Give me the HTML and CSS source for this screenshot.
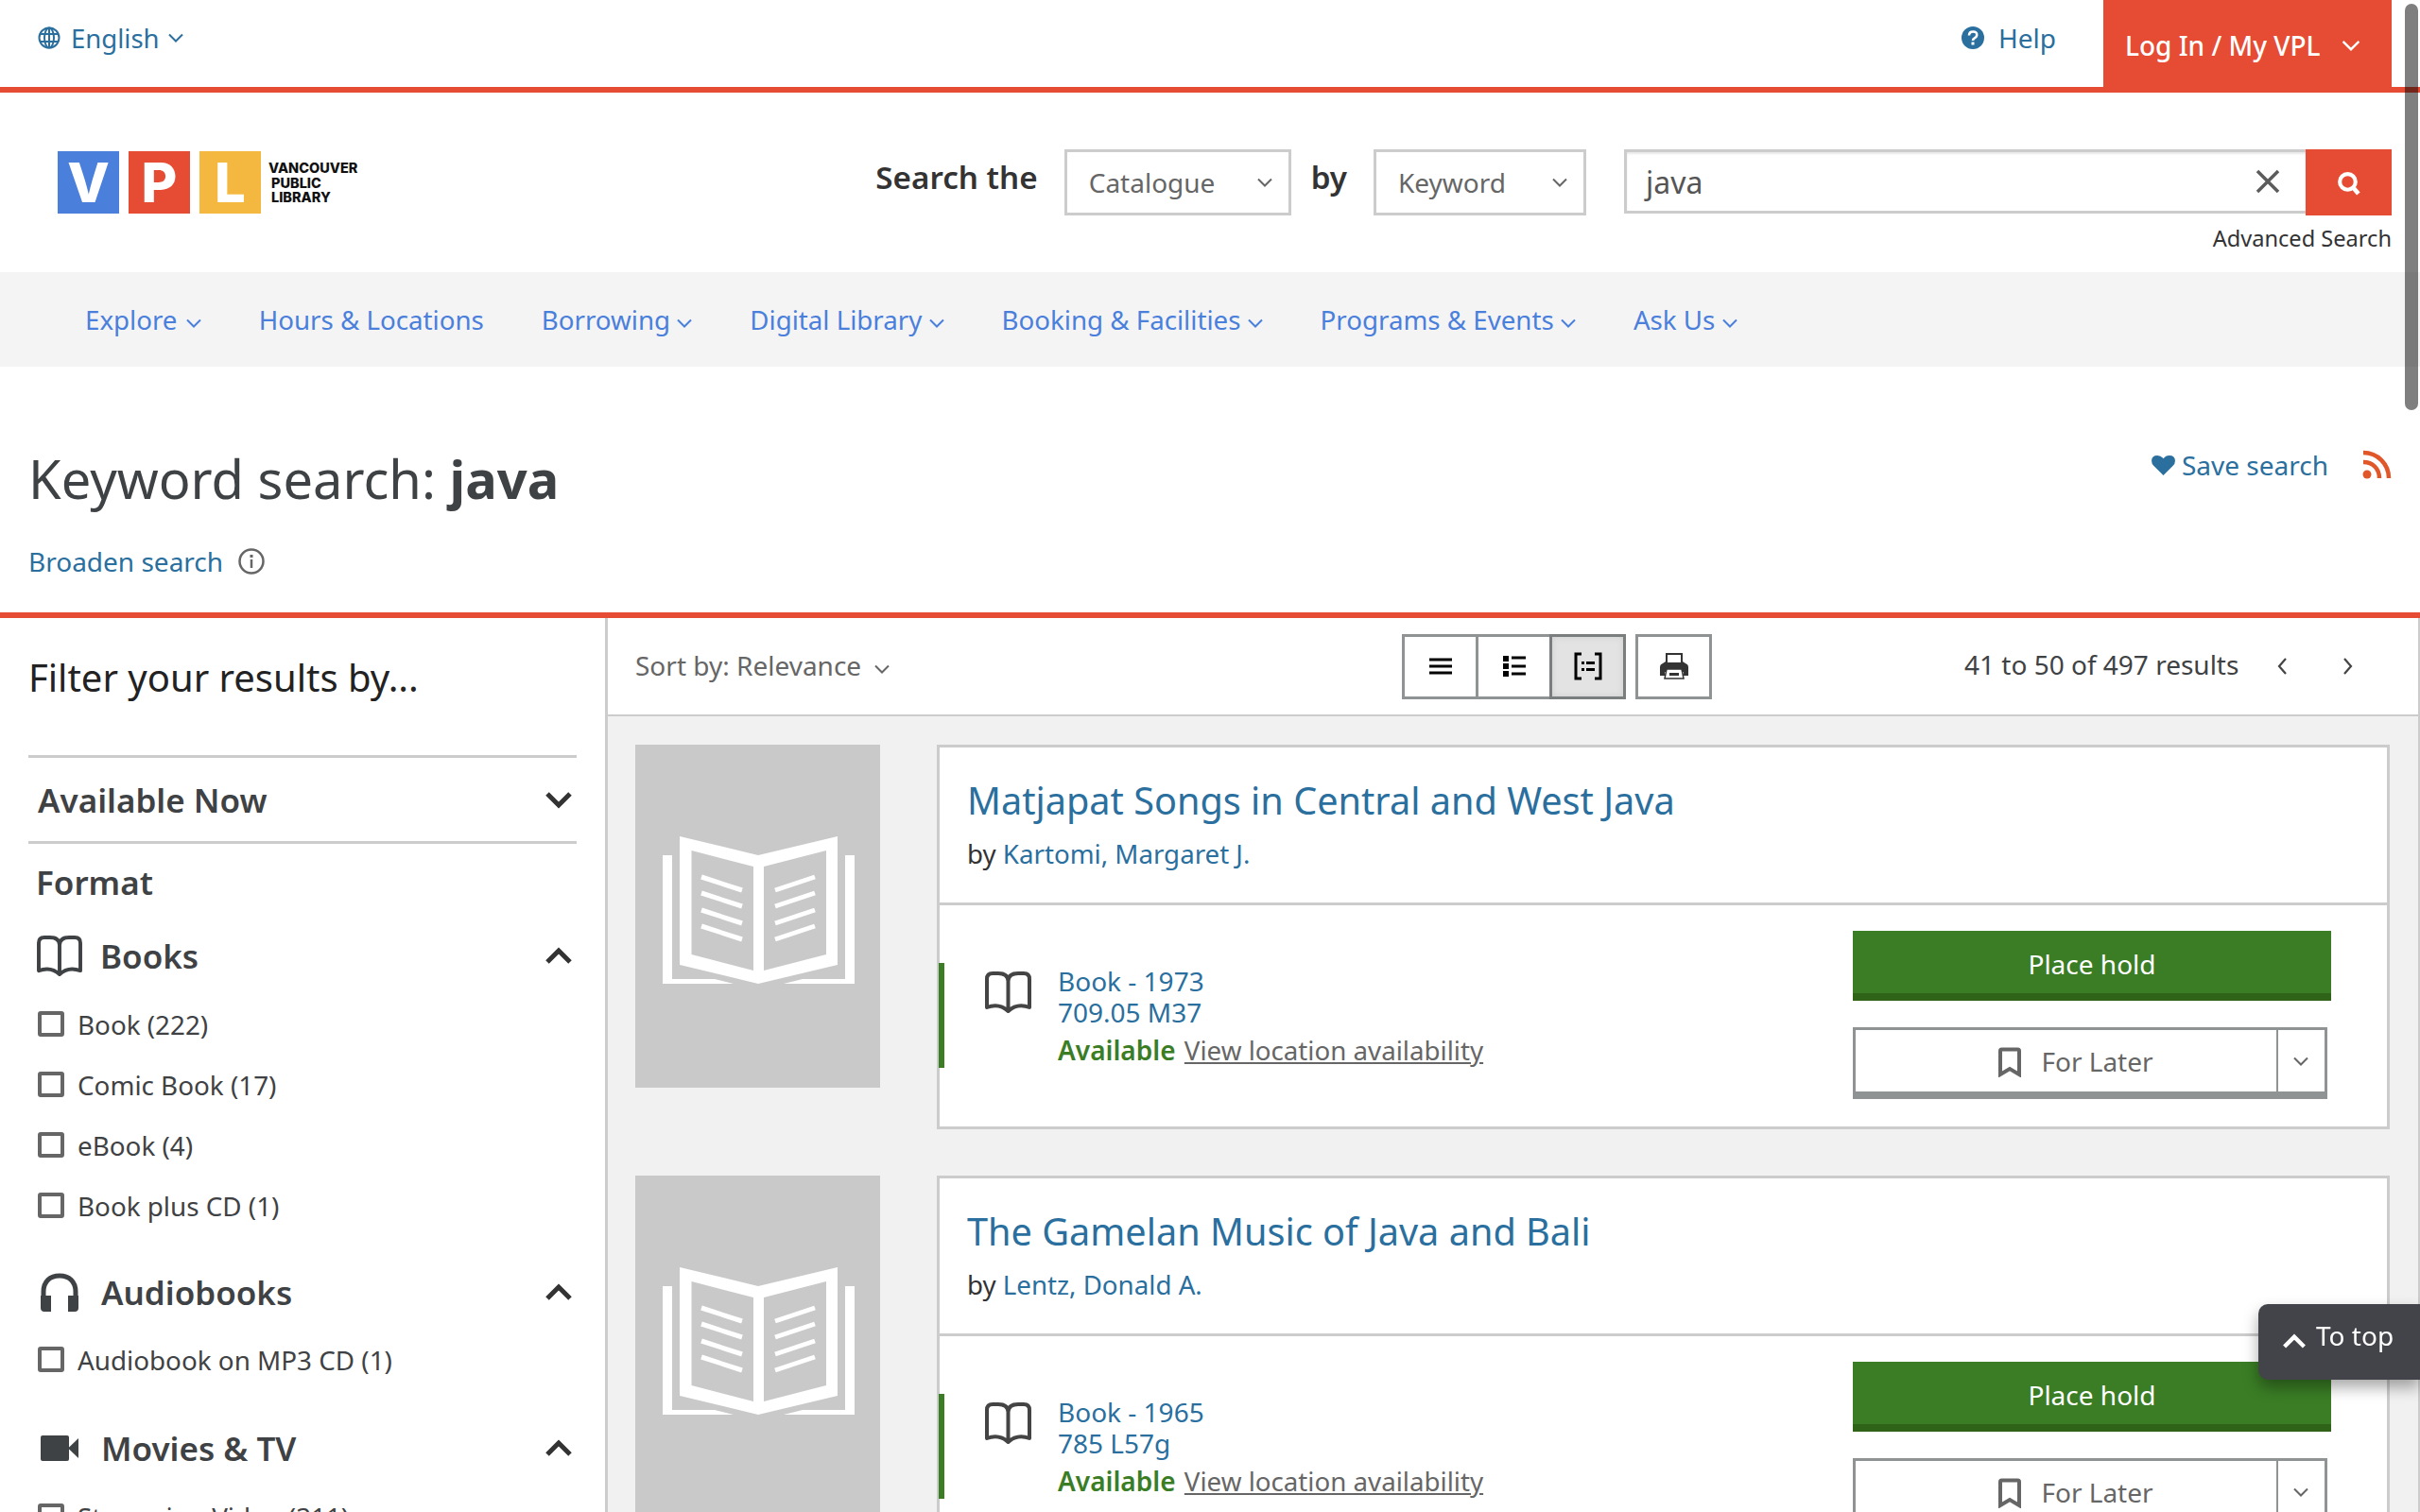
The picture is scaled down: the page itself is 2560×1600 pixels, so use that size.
FILE: index.html
```html
<!DOCTYPE html>
<html lang="en">
<head>
    <meta charset="UTF-8">
    <meta name="viewport" content="width=device-width, initial-scale=1.0">
    <title>Keyword search: java</title>
    <link rel="stylesheet" href="styles.css">
</head>
<body>
    <svg class="sprites">
        <defs>
            <symbol id="chev" viewBox="0 0 16 10">
                <path d="M1 1.500l7 7 7-7" fill="none" stroke="currentColor" stroke-width="2"></path>
            </symbol>
            <symbol id="chev-big" viewBox="0 0 30 20">
                <path d="M3 4l12 12 12-12" fill="none" stroke="currentColor" stroke-width="5"></path>
            </symbol>
            <symbol id="chev-up" viewBox="0 0 30 20">
                <path d="M3 17L15 5l12 12" fill="none" stroke="currentColor" stroke-width="5"></path>
            </symbol>
            <symbol id="book" viewBox="0 0 51 46">
                <path d="M3 39V9q0-6 6-6h6q10 0 10.500 8 .5-8 10.500-8h6q6 0 6 6v30q-13-5-22.500 4Q16 34 3 39zM25.500 11v31" fill="none" stroke="currentColor" stroke-width="4" stroke-linejoin="round"></path>
            </symbol>
            <symbol id="bookmark" viewBox="0 0 26 32">
                <path d="M3 29V4q0-1.500 1.500-1.500h17Q23 2.500 23 4v25l-10-6z" fill="none" stroke="currentColor" stroke-width="4"></path>
            </symbol>
            <symbol id="cover" viewBox="0 0 203 156">
                <path fill="#fff" fill-rule="evenodd" d="M18 0l83 20 84-20v136l-84 20-83-20zM30.500 15v110l65.500 17V32zM173 15l-66 17v110l66-17z"></path>
                <path fill="#fff" d="M0 20h10v131h45l20 5H0zM203 20h-10v131h-45l-20 5h75z"></path>
                <path stroke="#fff" stroke-width="5" d="M41 43l43 14M41 60l43 14M41 78l43 14M41 95l43 14M161 43l-42 14M161 60l-42 14M161 78l-42 14M161 95l-42 14"></path>
            </symbol>
        </defs>
    </svg>

    <div class="topbar">
        <a class="lang">
            <svg class="globe" viewBox="0 0 24 24"><g fill="none" stroke="currentColor" stroke-width="2"><circle cx="12" cy="12" r="10.500"></circle><ellipse cx="12" cy="12" rx="5" ry="10.500"></ellipse><path d="M2 8h20M2 16h20M12 1v22"></path></g></svg>
            English <svg class="chev"><use href="#chev"></use></svg>
        </a>
        <a class="help">
            <svg class="help-icon" viewBox="0 0 24 24"><circle cx="12" cy="12" r="12" fill="currentColor"></circle><path d="M8 9.500q0-4 4.200-4t4 3.500q0 2-2.500 3.300-1.700.9-1.700 2.700" fill="none" stroke="#fff" stroke-width="2.600"></path><rect x="10.500" y="16.500" width="3" height="3" fill="#fff"></rect></svg>
            Help
        </a>
        <a class="login">Log In / My VPL <svg class="chev"><use href="#chev"></use></svg></a>
    </div>

    <header class="masthead">
        <div class="logo">
            <span class="sq sq-v">V</span><span class="sq sq-p">P</span><span class="sq sq-l">L</span>
            <span class="logo-name">VANCOUVER<span>PUBLIC</span><span>LIBRARY</span></span>
        </div>
        <div class="search">
            <div class="search-row">
                <span class="search-label">Search the</span>
                <div class="select select-cat">Catalogue <svg class="chev"><use href="#chev"></use></svg></div>
                <span class="search-label by">by</span>
                <div class="select select-key">Keyword <svg class="chev"><use href="#chev"></use></svg></div>
                <div class="query">
                    <span>java</span>
                    <svg class="clear" viewBox="0 0 26 26"><path d="M2 2l22 22M24 2L2 24" stroke="currentColor" stroke-width="3.500"></path></svg>
                </div>
                <div class="go">
                    <svg viewBox="0 0 26 26" class="go-icon"><circle cx="12" cy="12" r="8" fill="none" stroke="#fff" stroke-width="4"></circle><path d="M17 17l6 7" stroke="#fff" stroke-width="4.500"></path></svg>
                </div>
            </div>
            <a class="advanced">Advanced Search</a>
        </div>
    </header>

    <nav class="mainnav">
        <a>Explore <svg class="chev"><use href="#chev"></use></svg></a>
        <a>Hours &amp; Locations</a>
        <a>Borrowing <svg class="chev"><use href="#chev"></use></svg></a>
        <a>Digital Library <svg class="chev"><use href="#chev"></use></svg></a>
        <a>Booking &amp; Facilities <svg class="chev"><use href="#chev"></use></svg></a>
        <a>Programs &amp; Events <svg class="chev"><use href="#chev"></use></svg></a>
        <a>Ask Us <svg class="chev"><use href="#chev"></use></svg></a>
    </nav>

    <section class="heading">
        <div>
            <h1>Keyword search: <b>java</b></h1>
            <a class="broaden">Broaden search
                <svg class="info" viewBox="0 0 30 30"><circle cx="15" cy="15" r="12.500" fill="none" stroke="currentColor" stroke-width="2.500"></circle><path d="M15 13v9" stroke="currentColor" stroke-width="2.500"></path><rect x="13.500" y="8" width="3" height="3" fill="currentColor"></rect></svg>
            </a>
        </div>
        <div class="heading-tools">
            <a class="save">
                <svg class="heart" viewBox="0 0 26 24"><path d="M13 23L2.500 12.500Q0 10 0 7 0 1 6.500 1 10.500 1 13 4.500 15.500 1 19.500 1 26 1 26 7q0 3-2.500 5.500z" fill="currentColor"></path></svg>
                Save search
            </a>
            <svg class="rss" viewBox="0 0 32 32"><g fill="none" stroke="currentColor" stroke-width="4.500"><path d="M2 3c15 0 27 12 27 27"></path><path d="M2 13c10 0 17 7 17 17"></path></g><circle cx="6" cy="26" r="4.500" fill="currentColor"></circle></svg>
        </div>
    </section>

    <div class="layout">
        <aside class="filters">
            <h2>Filter your results by...</h2>
            <div class="avail-now">Available Now <svg class="chev-big"><use href="#chev-big"></use></svg></div>
            <div class="format-label">Format</div>

            <div class="group group-books">
                <svg class="group-icon book-icon"><use href="#book"></use></svg>
                <span>Books</span>
                <svg class="chev-big"><use href="#chev-up"></use></svg>
            </div>
            <label class="check"><i></i>Book (222)</label>
            <label class="check"><i></i>Comic Book (17)</label>
            <label class="check"><i></i>eBook (4)</label>
            <label class="check"><i></i>Book plus CD (1)</label>

            <div class="group group-audio">
                <svg class="group-icon" viewBox="0 0 40 41"><path d="M3 26V20C3 9 10 3 20 3s17 6 17 17v6" fill="none" stroke="currentColor" stroke-width="5"></path><path d="M0 24h11v17H4q-4 0-4-4zM40 24H29v17h7q4 0 4-4z" fill="currentColor"></path></svg>
                <span>Audiobooks</span>
                <svg class="chev-big"><use href="#chev-up"></use></svg>
            </div>
            <label class="check"><i></i>Audiobook on MP3 CD (1)</label>

            <div class="group group-movies">
                <svg class="group-icon video-icon" viewBox="0 0 40 27"><rect width="30" height="27" rx="2" fill="currentColor"></rect><path d="M29 13.500L40 3v21z" fill="currentColor"></path></svg>
                <span>Movies &amp; TV</span>
                <svg class="chev-big"><use href="#chev-up"></use></svg>
            </div>
            <label class="check"><i></i>Streaming Video (311)</label>
        </aside>

        <main class="results">
            <div class="toolbar">
                <div class="sort">Sort by: Relevance <svg class="chev"><use href="#chev"></use></svg></div>
                <div class="views">
                    <div class="view-group">
                        <button class="view-btn"><svg viewBox="0 0 26 22"><path d="M1 4h24M1 11h24M1 18h24" stroke="#000" stroke-width="3"></path></svg></button>
                        <button class="view-btn"><svg viewBox="0 0 26 26"><path d="M1 2h6v6H1zM1 10h6v6H1zM1 18h6v6H1z"></path><path d="M10 4h15M10 13h15M10 21h15" stroke="#000" stroke-width="3"></path></svg></button>
                        <button class="view-btn active"><svg viewBox="0 0 30 30"><path d="M8 2H2v26h6M22 2h6v26h-6" fill="none" stroke="#000" stroke-width="3"></path><path d="M8 10h3v3H8zM8 17h3v3H8z"></path><path d="M13 11.500h9M13 18.500h9" stroke="#000" stroke-width="3"></path></svg></button>
                    </div>
                    <button class="view-btn print"><svg viewBox="0 0 30 30"><path d="M0 25V16q0-3 3-4l3-2V1h18v9l3 2q3 1 3 4v9h-5v-4H5v4z" fill="#333"></path><path d="M8 3h14v8H8z" fill="#fff"></path><path d="M7 18h16l2 10H5z" fill="#fff" stroke="#333" stroke-width="1.500"></path><path d="M10 22h10v3H10z" fill="#333"></path></svg></button>
                </div>
                <div class="paging">
                    41 to 50 of 497 results
                    <svg class="arrow" viewBox="0 0 12 20"><path d="M10 2L3 10l7 8" fill="none" stroke="currentColor" stroke-width="2.200"></path></svg>
                    <svg class="arrow next" viewBox="0 0 12 20"><path d="M2 2l7 8-7 8" fill="none" stroke="currentColor" stroke-width="2.200"></path></svg>
                </div>
            </div>

            <div class="list">
                <article class="result">
                    <div class="cover"><svg><use href="#cover"></use></svg></div>
                    <div class="card">
                        <div class="card-head">
                            <a class="title">Matjapat Songs in Central and West Java</a>
                            <div class="byline">by <a>Kartomi, Margaret J.</a></div>
                        </div>
                        <div class="card-body">
                            <div class="info-block">
                                <svg class="format-icon"><use href="#book"></use></svg>
                                <div class="info-text">
                                    <a>Book - 1973</a>
                                    <a>709.05 M37</a>
                                    <div class="status"><b>Available</b> <a class="where">View location availability</a></div>
                                </div>
                            </div>
                            <div class="actions">
                                <button class="hold">Place hold</button>
                                <div class="later">
                                    <span class="later-main"><svg class="bookmark"><use href="#bookmark"></use></svg>For Later</span>
                                    <span class="later-more"><svg class="chev"><use href="#chev"></use></svg></span>
                                </div>
                            </div>
                        </div>
                    </div>
                </article>

                <article class="result">
                    <div class="cover"><svg><use href="#cover"></use></svg></div>
                    <div class="card">
                        <div class="card-head">
                            <a class="title">The Gamelan Music of Java and Bali</a>
                            <div class="byline">by <a>Lentz, Donald A.</a></div>
                        </div>
                        <div class="card-body">
                            <div class="info-block">
                                <svg class="format-icon"><use href="#book"></use></svg>
                                <div class="info-text">
                                    <a>Book - 1965</a>
                                    <a>785 L57g</a>
                                    <div class="status"><b>Available</b> <a class="where">View location availability</a></div>
                                </div>
                            </div>
                            <div class="actions">
                                <button class="hold">Place hold</button>
                                <div class="later">
                                    <span class="later-main"><svg class="bookmark"><use href="#bookmark"></use></svg>For Later</span>
                                    <span class="later-more"><svg class="chev"><use href="#chev"></use></svg></span>
                                </div>
                            </div>
                        </div>
                    </div>
                </article>
            </div>
        </main>
    </div>

    <a class="to-top"><svg class="to-top-icon"><use href="#chev-up"></use></svg>To top</a>
    <div class="scroll-thumb"></div>
</body>
</html>
```

FILE: styles.css
```css
html, body { margin: 0; height: 1600px; overflow: hidden; }
body { font-family: "Noto Sans", "Open Sans", sans-serif; font-size: 28px; color: #3f4244; background: #fff; }
a { color: inherit; text-decoration: none; }
button { font-family: inherit; }
.sprites { width: 1px; height: 1px; position: absolute; left: -100em; }
.chev { width: 16px; height: 10px; vertical-align: middle; margin-left: -1px; }

/* top strip */
.topbar { display: flex; align-items: flex-start; height: 92px; padding-right: 30px; border-bottom: 6px solid #e64b33; color: #2a6f9e; }
.lang { display: flex; align-items: center; gap: 9px; height: 80px; padding-left: 40px; margin-right: auto; font-size: 27.500px; }
.lang .chev { margin-left: 0; }
.globe { width: 24px; height: 24px; margin-right: 2px; }
.help { display: flex; align-items: center; gap: 15px; height: 80px; margin-right: 50px; }
.help-icon { width: 24px; height: 24px; }
.login { display: flex; align-items: center; justify-content: space-between; width: 305px; height: 98px; box-sizing: border-box; padding: 0 33px 2px 23px; background: #e64b33; color: #fff; font-weight: 500; }
.login .chev { width: 20px; height: 12px; }

/* logo and search */
.masthead { display: flex; justify-content: space-between; height: 190px; padding: 60px 30px 0 61px; box-sizing: border-box; }
.logo { display: flex; padding-top: 2px; height: 66px; }
.sq { display: flex; align-items: center; justify-content: center; width: 65px; height: 66px; margin-right: 10px; color: #fff; font-family: Inter, sans-serif; font-size: 58px; font-weight: 800; }
.sq-v { background: #4a7fdc; }
.sq-p { background: #e64b33; }
.sq-l { background: #f4b840; margin-right: 8px; }
.logo-name { font-family: Inter, sans-serif; font-size: 14.500px; line-height: 15.500px; font-weight: 800; color: #111; padding-top: 10px; }
.logo-name span { display: block; padding-left: 3px; }
.search-row { display: flex; align-items: flex-start; height: 70px; }
.search-label { font-size: 33.200px; font-weight: 600; line-height: 60px; margin-right: 28px; color: #333; }
.search-label.by { margin-left: 21px; }
.select { display: flex; align-items: center; justify-content: space-between; height: 70px; box-sizing: border-box; border: 3px solid #ccc; padding: 0 17px 0 23px; color: #666; }
.select-cat { width: 240px; }
.select-key { width: 225px; margin-right: 40px; }
.query { display: flex; align-items: center; justify-content: space-between; width: 721px; height: 68px; box-sizing: border-box; border: 3px solid #ccc; border-right: 0; box-shadow: inset 0 2px 2px #e8e8e8; padding: 0 27px 0 20px; font-size: 32px; color: #555; }
.clear { width: 26px; height: 26px; color: #5c5c5c; }
.go { display: flex; align-items: center; justify-content: center; width: 91px; height: 70px; background: #e64b33; }
.go-icon { width: 27px; height: 27px; }
.advanced { display: block; margin-top: 8px; text-align: right; font-size: 23.600px; color: #333; }

.mainnav { display: flex; align-items: center; gap: 61px; height: 100px; padding-left: 90px; background: #f4f4f4; color: #4a7fdc; font-size: 27.700px; }
.mainnav .chev { margin-left: 0; }
.mainnav a:first-child .chev { margin-left: 2px; }

/* page heading */
.heading { display: flex; justify-content: space-between; height: 266px; box-sizing: border-box; padding: 72px 30px 0; border-bottom: 6px solid #e64b33; }
.heading h1 { margin: 0; font-size: 56px; font-weight: 400; line-height: 92px; color: #3f4244; }
.broaden { display: flex; align-items: center; gap: 15px; margin-top: 23px; color: #2a6f9e; }
.info { width: 30px; height: 30px; color: #666; }
.heading-tools { display: flex; align-items: center; align-self: flex-start; color: #2a6f9e; margin-top: 13px; }
.save { display: flex; align-items: center; gap: 7px; }
.heart { width: 25px; height: 23px; }
.rss { width: 32px; height: 32px; margin-left: 35px; color: #e0582a; }

/* sidebar */
.layout { display: flex; height: 946px; }
.filters { width: 640px; flex: none; box-sizing: border-box; padding: 0 30px; }
.filters h2 { margin: 0; height: 145px; padding-top: 38px; box-sizing: border-box; font-size: 40px; font-weight: 400; line-height: 50px; color: #222; }
.avail-now { display: flex; align-items: center; justify-content: space-between; width: 580px; height: 94px; box-sizing: border-box; padding: 0 4px 0 10px; border-top: 3px solid #ccc; border-bottom: 3px solid #ccc; font-size: 35px; font-weight: 600; }
.chev-big { width: 30px; height: 20px; color: #333; flex: none; }
.format-label { height: 82px; line-height: 82px; padding-left: 8px; font-size: 35px; font-weight: 600; }
.group { display: flex; align-items: center; width: 580px; height: 60px; padding: 0 4px 0 8px; box-sizing: border-box; font-size: 35px; font-weight: 600; }
.group span { margin-right: auto; }
.group-icon { width: 40px; height: 41px; margin: 0 24px 0 5px; flex: none; }
.book-icon { width: 50px; height: 45px; margin: 0 18px 0 0; }
.video-icon { height: 27px; }
.group-books { margin-top: 6px; margin-bottom: 29px; }
.group-audio { margin-top: 48px; margin-bottom: 28px; }
.group-movies { margin-top: 50px; margin-bottom: 29px; }
.check { display: flex; align-items: center; height: 27px; margin: 0 0 37px 10px; white-space: nowrap; font-size: 27.800px; }
.check i { width: 28px; height: 27px; box-sizing: border-box; border: 4px solid #666; border-radius: 3px; margin-right: 14px; flex: none; }

/* results */
.results { flex: 1; min-width: 0; border-left: 3px solid #ccc; border-right: 2px solid #ccc; background: #f1f1f1; }
.toolbar { display: flex; align-items: center; height: 102px; padding-left: 29px; background: #fff; border-bottom: 2px solid #ccc; position: relative; }
.sort { color: #666; width: 814px; flex: none; padding-bottom: 2px; }
.sort .chev { margin-left: 7px; }
.views { display: flex; gap: 10px; }
.view-group { display: flex; }
.view-btn { display: flex; align-items: center; justify-content: center; width: 81px; height: 69px; padding: 0; background: #fff; border: 3px solid #8f9393; margin-left: -3px; }
.view-btn svg { width: 26px; height: 26px; }
.view-btn.active { background: #e3e3e3; border-color: #7a7e7e; box-shadow: inset 0 0 6px #ccc; }
.view-btn.active svg { width: 30px; height: 30px; }
.view-btn.print { margin-left: 0; }
.view-btn.print svg { width: 30px; height: 30px; }
.paging { display: flex; align-items: center; margin-left: 267px; color: #3f4244; padding-bottom: 4px; }
.arrow { width: 12px; height: 20px; margin-left: 40px; margin-top: 4px; color: #444; }
.arrow.next { margin-left: 58px; }

.list { padding: 30px 30px 0 29px; }
.result { display: flex; gap: 60px; align-items: flex-start; margin-bottom: 49px; }
.cover { display: flex; align-items: center; justify-content: center; width: 259px; height: 363px; flex: none; background: #c9c9c9; }
.cover svg { width: 203px; height: 156px; margin: 0 0 13px 2px; }
.card { flex: 1; height: 407px; box-sizing: border-box; border: 3px solid #ccc; background: #fff; }
.card-head { height: 167px; box-sizing: border-box; padding: 29px 0 0 29px; border-bottom: 3px solid #ccc; color: #333; }
.title { display: block; font-size: 39.650px; line-height: 54px; color: #2a6f9e; }
.byline { margin-top: 10px; line-height: 38px; font-size: 27.700px; }
.byline a { color: #2a6f9e; }
.card-body { display: flex; justify-content: space-between; padding-right: 59px; }
.info-block { display: flex; height: 111px; margin: 61px 0 0 -1px; padding-left: 42px; border-left: 6px solid #3a7d25; }
.format-icon { width: 51px; height: 46px; margin: 8px 27px 0 0; color: #444; flex: none; }
.info-text { display: flex; flex-direction: column; color: #2a6f9e; line-height: 33px; margin-top: 3px; }
.status { margin-top: 7px; color: #666; white-space: nowrap; }
.status b { color: #3a7d25; font-weight: 600; }
.where { text-decoration: underline; margin-left: 2px; font-size: 27.700px; }
.actions { display: flex; flex-direction: column; gap: 28px; margin-top: 27px; width: 506px; }
.hold { width: 506px; height: 74px; box-sizing: border-box; padding: 4px 0 0; border: 0; border-bottom: 8px solid #2f6418; background: #3a7d25; color: #fff; font-size: 28px; }
.later { display: flex; width: 502px; height: 76px; box-sizing: border-box; border: 3px solid #8f9393; border-bottom-width: 8px; color: #666; }
.later-main { display: flex; align-items: center; justify-content: center; gap: 20px; flex: 1; padding-left: 20px; }
.bookmark { width: 26px; height: 32px; margin-top: 3px; }
.later-more { display: flex; align-items: center; justify-content: center; width: 49px; border-left: 2px solid #8f9393; }

/* floating bits */
.to-top { position: fixed; right: 0; top: 1380px; display: flex; align-items: center; gap: 10px; width: 171px; height: 80px; box-sizing: border-box; padding: 0 0 14px 25px; background: #434449; color: #fff; border-radius: 10px 0 0 10px; box-shadow: 0 8px 16px rgba(0, 0, 0, .35); }
.to-top-icon { width: 26px; height: 18px; margin-top: 12px; }
.scroll-thumb { position: fixed; right: 2px; top: 4px; width: 14px; height: 430px; background: rgba(0, 0, 0, .5); border-radius: 7px; }
```
